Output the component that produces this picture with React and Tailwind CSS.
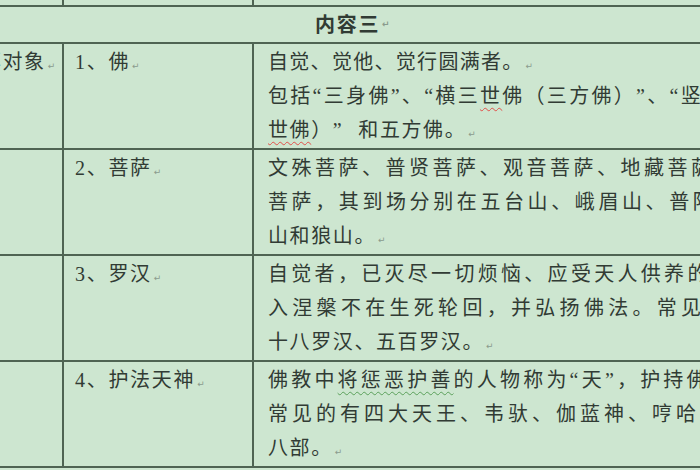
import React from "react";

const LINE = "border-[#4f6453]";

const Mark = () => (
  <span className="ml-[2px] font-['DejaVu_Sans'] text-[9px] tracking-normal text-[#8a9b8d]">↵</span>
);

const Wavy = ({ color, children }) => (
  <span className={`underline decoration-wavy decoration-1 underline-offset-[4px] ${color}`}>{children}</span>
);

// wrapped lines are justified in the source document, hence the wider spacing
const rows = [
  {
    side: "崇拜对象",
    title: "1、佛",
    lines: [
      ["tracking-[1.3px]", <>自觉、觉他、觉行圆满者。<Mark /></>],
      ["tracking-[2.3px]", <>包括“三身佛”、“横三<Wavy color="decoration-[#e0504a]">世</Wavy>佛（三方佛）”、“竖三</>],
      ["tracking-[1.6px]", <><Wavy color="decoration-[#e0504a]">世佛</Wavy>）”<span className="inline-block w-[15px]" />和五方佛。<Mark /></>],
    ],
  },
  {
    title: "2、菩萨",
    lines: [
      ["tracking-[3.5px]", <>文殊菩萨、普贤菩萨、观音菩萨、地藏菩萨</>],
      ["tracking-[3.6px]", <>菩萨，其到场分别在五台山、峨眉山、普陀</>],
      ["tracking-[1.6px]", <>山和狼山。<Mark /></>],
    ],
  },
  {
    title: "3、罗汉",
    lines: [
      ["tracking-[3.3px]", <>自觉者，已灭尽一切烦恼、应受天人供养的</>],
      ["tracking-[4.3px]", <>入涅槃不在生死轮回，并弘扬佛法。常见一</>],
      ["tracking-[1.6px]", <>十八罗汉、五百罗汉。<Mark /></>],
    ],
  },
  {
    title: "4、护法天神",
    lines: [
      ["tracking-[3.2px]", <>佛教中<Wavy color="decoration-[#5aa05a]">将惩恶护善</Wavy>的人物称为“天”，护持佛</>],
      ["tracking-[4px]", <>常见的有四大天王、韦驮、伽蓝神、哼哈二</>],
      ["tracking-[1.6px]", <>八部。<Mark /></>],
    ],
  },
];

const Row = ({ side, title, lines }) => (
  <div className={`flex h-[106px] border-b-2 ${LINE}`}>
    <div className={`w-[112px] shrink-0 border-r-2 ${LINE} pl-[7px] pt-px`}>
      {side && (
        <div className="h-[34px] leading-[34px] whitespace-nowrap">
          {side}
          <Mark />
        </div>
      )}
    </div>
    <div className={`w-[190px] shrink-0 border-r-2 ${LINE} pl-[11px] pt-px`}>
      <div className="h-[34px] leading-[34px] whitespace-nowrap">
        {title}
        <Mark />
      </div>
    </div>
    <div className="flex-1 overflow-hidden pl-[14px] pt-px">
      {lines.map(([t, l], i) => (
        <div key={i} className={`h-[34px] leading-[34px] whitespace-nowrap ${t}`}>
          {l}
        </div>
      ))}
    </div>
  </div>
);

export default function App() {
  return (
    <div className="h-[470px] w-[700px] overflow-hidden bg-[#cde6d0]">
      <div className="ml-[-48px] w-[820px] font-[family-name:'Liberation_Serif','Noto_Sans_CJK_SC',serif] text-[20px] tracking-[1.7px] text-[#313b34] [text-spacing-trim:space-all]">
        <div className={`flex h-[7px] border-b-2 ${LINE}`}>
          <div className={`w-[112px] shrink-0 border-r-2 ${LINE}`} />
          <div className={`w-[190px] shrink-0 border-r-2 ${LINE}`} />
          <div className="flex-1" />
        </div>
        <div className={`flex h-[37px] items-center border-b-2 ${LINE} pl-[363px] font-bold`}>
          内容三
          <Mark />
        </div>
        {rows.map((r, i) => (
          <Row key={i} {...r} />
        ))}
      </div>
    </div>
  );
}
